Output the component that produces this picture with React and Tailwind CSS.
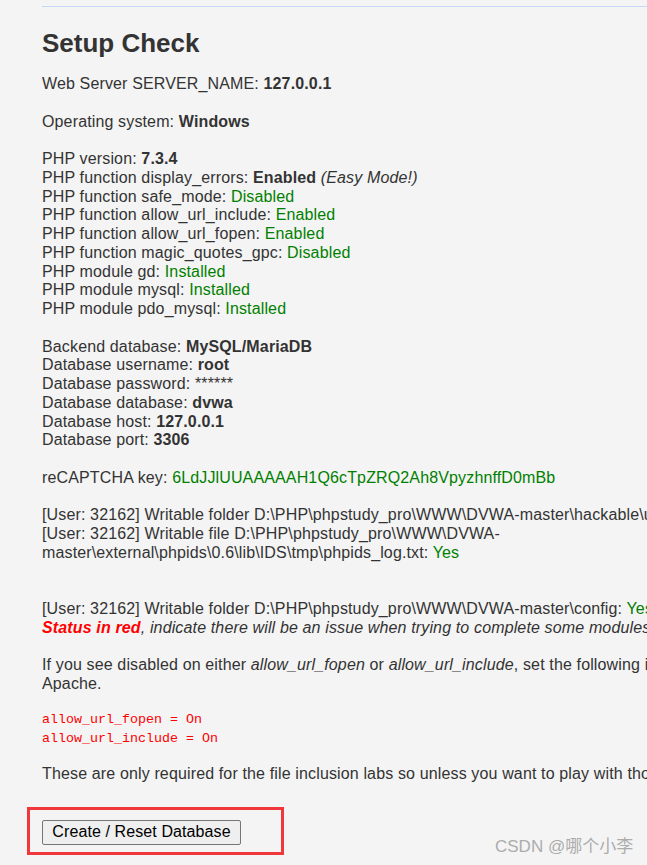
import React from 'react';

// DVWA "Setup Check" page, cropped to the left of the viewport
const ok = 'text-[#008000]';

export default function App() {
  return (
    <div className="relative h-[865px] w-[647px] overflow-hidden bg-[#f4f4f4] font-['Liberation_Sans',Arial,sans-serif] text-[#333]">
      <div className="ml-[42px] w-[823px] pt-[6px]">
        <div className="border-t border-[#c6d5f8]" />
        <h1 className="mt-[21px] text-[26px] font-bold leading-[30px]">Setup Check</h1>

        <div className="mt-[17px] text-[16px] leading-[18.75px] tracking-[0.14px]">
          Web Server SERVER_NAME: <b>127.0.0.1</b><br /><br />
          Operating system: <b>Windows</b><br /><br />
          PHP version: <b>7.3.4</b><br />
          PHP function display_errors: <b>Enabled</b> <i>(Easy Mode!)</i><br />
          PHP function safe_mode: <span className={ok}>Disabled</span><br />
          PHP function allow_url_include: <span className={ok}>Enabled</span><br />
          PHP function allow_url_fopen: <span className={ok}>Enabled</span><br />
          PHP function magic_quotes_gpc: <span className={ok}>Disabled</span><br />
          PHP module gd: <span className={ok}>Installed</span><br />
          PHP module mysql: <span className={ok}>Installed</span><br />
          PHP module pdo_mysql: <span className={ok}>Installed</span><br /><br />
          Backend database: <b>MySQL/MariaDB</b><br />
          Database username: <b>root</b><br />
          Database password: ******<br />
          Database database: <b>dvwa</b><br />
          Database host: <b>127.0.0.1</b><br />
          Database port: <b>3306</b><br /><br />
          reCAPTCHA key: <span className={ok}>6LdJJlUUAAAAAH1Q6cTpZRQ2Ah8VpyzhnffD0mBb</span><br /><br />
          [User: 32162] Writable folder D:\PHP\phpstudy_pro\WWW\DVWA-master\hackable\uploads\: <span className={ok}>Yes</span><br />
          [User: 32162] Writable file D:\PHP\phpstudy_pro\WWW\DVWA-master\external\phpids\0.6\lib\IDS\tmp\phpids_log.txt: <span className={ok}>Yes</span><br /><br /><br />
          [User: 32162] Writable folder D:\PHP\phpstudy_pro\WWW\DVWA-master\config: <span className={ok}>Yes</span><br />
          <i><b className="text-[#f00]">Status in red</b>, indicate there will be an issue when trying to complete some modules.</i><br /><br />
          If you see disabled on either <i>allow_url_fopen</i> or <i>allow_url_include</i>, set the following in your php.ini file and restart Apache.
        </div>

        <pre className="mt-[16px] font-['Liberation_Mono',monospace] text-[13.33px] leading-[19px] text-[#f00]">
          allow_url_fopen = On{'\n'}allow_url_include = On
        </pre>

        <p className="mt-[17px] text-[16px] leading-[18.75px] tracking-[0.14px]">
          These are only required for the file inclusion labs so unless you want to play with those, you can ignore them.
        </p>

        <button className="mt-[36px] h-[25px] w-[199px] rounded-[2px] border border-[#767676] bg-[#efefef] text-[16px] leading-none tracking-[0.1px] text-black">
          Create / Reset Database
        </button>
      </div>

      {/* annotation box */}
      <div className="absolute left-[27px] top-[807px] h-[48px] w-[257px] border-[3px] border-[#f0383c]" />

      {/* watermark */}
      <div className="absolute left-[495px] top-[837px] whitespace-nowrap text-[17px] leading-[20px] text-[#acacac] font-['Liberation_Sans','Noto_Sans_CJK_SC',sans-serif]">
        CSDN @哪个小李
      </div>
    </div>
  );
}
